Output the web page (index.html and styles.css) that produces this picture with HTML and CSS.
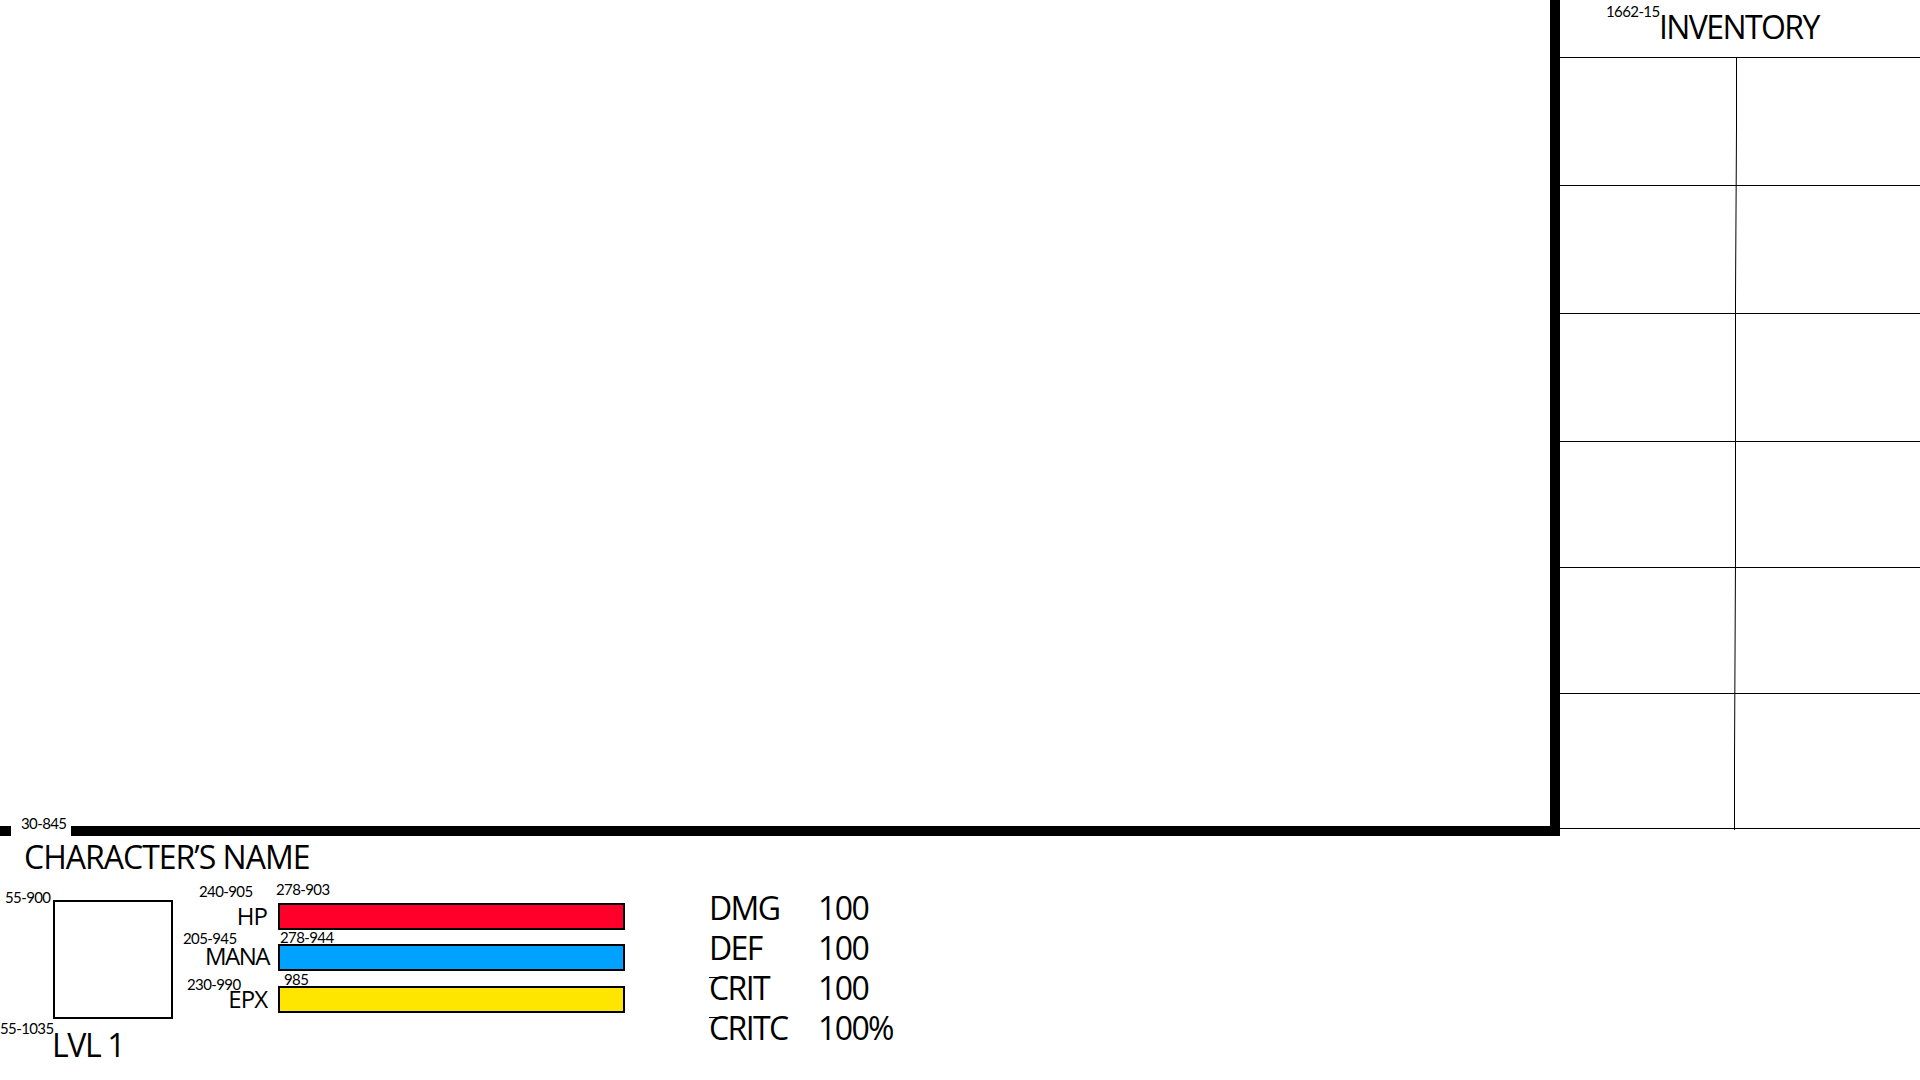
FILE: index.html
```html
<!DOCTYPE html>
<html lang="en">
<head>
<meta charset="utf-8">
<title>Game HUD layout</title>
<link rel="stylesheet" href="styles.css">
</head>
<body>
<div class="top">
  <main class="stage"></main>
  <aside class="inventory">
    <header class="inv-head">
      <span class="note note-inv">1662-15</span>
      <h2 class="inv-title">INVENTORY</h2>
    </header>
    <div class="inv-grid">
      <div class="inv-row r128"></div>
      <div class="inv-row r128"></div>
      <div class="inv-row r128"></div>
      <div class="inv-row r126"></div>
      <div class="inv-row r126"></div>
      <div class="inv-row r135"></div>
      <svg class="inv-divider" width="4" height="772" viewBox="0 0 4 772"><path d="M3.5 0V70L2.5 240V500L1.5 700V772" fill="none" stroke="#000" stroke-width="1"/></svg>
    </div>
  </aside>
</div>
<section class="hud">
  <span class="note note-hud">30-845</span>
  <h1 class="char-name">CHARACTER’S NAME</h1>
  <div class="hud-row">
    <div class="portrait-col">
      <span class="note note-portrait">55-900</span>
      <div class="portrait"></div>
      <span class="note note-lvl">55-1035</span>
      <div class="level">LVL 1</div>
    </div>
    <div class="meters">
      <div class="meter meter-hp">
        <span class="note note-hp-l">240-905</span>
        <span class="note note-hp-b">278-903</span>
        <span class="meter-label label-hp">HP</span>
        <div class="bar bar-hp"></div>
      </div>
      <div class="meter meter-mana">
        <span class="note note-mana-l">205-945</span>
        <span class="note note-mana-b">278-944</span>
        <span class="meter-label label-mana">MANA</span>
        <div class="bar bar-mana"></div>
      </div>
      <div class="meter meter-epx">
        <span class="note note-epx-l">230-990</span>
        <span class="note note-epx-b">985</span>
        <span class="meter-label label-epx">EPX</span>
        <div class="bar bar-epx"></div>
      </div>
    </div>
    <div class="stats">
      <span class="stat-name">DMG</span><span class="stat-value">100</span>
      <span class="stat-name">DEF</span><span class="stat-value">100</span>
      <span class="stat-name tick">CRIT</span><span class="stat-value">100</span>
      <span class="stat-name tick">CRITC</span><span class="stat-value">100%</span>
    </div>
  </div>
</section>
</body>
</html>
```
FILE: styles.css
```css
* { box-sizing: border-box; }
html, body { margin: 0; height: 1080px; overflow: hidden; background: #fff; }
body { font-family: "Open Sans", "Noto Sans", sans-serif; color: #000; position: relative; }

.top { display: flex; align-items: flex-start; height: 836px; }
.stage { width: 1560px; height: 836px; border-right: 10px solid #000; border-bottom: 10px solid #000; flex: none; }

.inventory { flex: 1; }
.inv-head { position: relative; height: 58px; border-bottom: 1px solid #000; padding-left: 99px; }
.inv-title { margin: 0; font-size: 32px; font-weight: 400; line-height: 54px; letter-spacing: -1.6px; }
.inv-grid { position: relative; }
.inv-row { border-bottom: 1px solid #000; }
.r128 { height: 128px; }
.r126 { height: 126px; }
.r135 { height: 135px; }
.inv-divider { position: absolute; left: 173px; top: 0; display: block; }

.note { position: absolute; font-family: Lato, "Liberation Sans", sans-serif; font-size: 15px; letter-spacing: -0.6px; line-height: 16px; white-space: nowrap; }
.note-inv { left: 46px; top: 3px; }

.hud { position: relative; height: 244px; padding-top: 1px; }
.note-hud { left: 11px; top: -24px; width: 60px; height: 24px; padding: 3px 0 0 10px; background: #fff; }
.char-name { margin: 0 0 11px 24px; font-size: 32px; font-weight: 400; line-height: 40px; letter-spacing: -1px; }

.hud-row { display: flex; align-items: flex-start; }
.portrait-col { position: relative; width: 120px; margin: 12px 0 0 53px; flex: none; }
.portrait { width: 120px; height: 119px; border: 2px solid #000; }
.level { margin: 6px 0 0 -1px; font-size: 32px; line-height: 40px; letter-spacing: -1.4px; }
.note-portrait { left: -48px; top: -11px; }
.note-lvl { left: -53px; top: 120px; }

.meters { margin: 15px 0 0 32px; width: 420px; flex: none; }
.meter { position: relative; display: flex; align-items: center; height: 27px; gap: 9px; }
.meter-hp { margin-bottom: 14px; }
.meter-mana { margin-bottom: 15px; }
.meter-label { flex: none; width: 64px; text-align: right; font-size: 24px; line-height: 27px; letter-spacing: -1px; }
.label-hp { padding: 0 2px 2px 0; }
.label-mana { padding: 0 0 4px 0; letter-spacing: -1.5px; }
.label-epx { padding: 0 2px 2px 0; }
.bar { width: 347px; height: 27px; border: 2px solid #000; }
.bar-hp { background: #ff002b; }
.bar-mana { background: #00a2ff; }
.bar-epx { background: #ffe600; }
.note-hp-l { left: -6px; top: -20px; }
.note-hp-b { left: 71px; top: -22px; }
.note-mana-l { left: -22px; top: -14px; }
.note-mana-b { left: 75px; top: -15px; }
.note-epx-l { left: -18px; top: -10px; }
.note-epx-b { left: 79px; top: -15px; }

.stats { margin-left: 84px; display: grid; grid-template-columns: 109px auto; grid-auto-rows: 40px; font-size: 32px; line-height: 40px; letter-spacing: -1.6px; }
.stat-name { position: relative; }
.tick::before { content: ""; position: absolute; left: 0; top: 9px; width: 8px; height: 1px; background: #000; }
```
